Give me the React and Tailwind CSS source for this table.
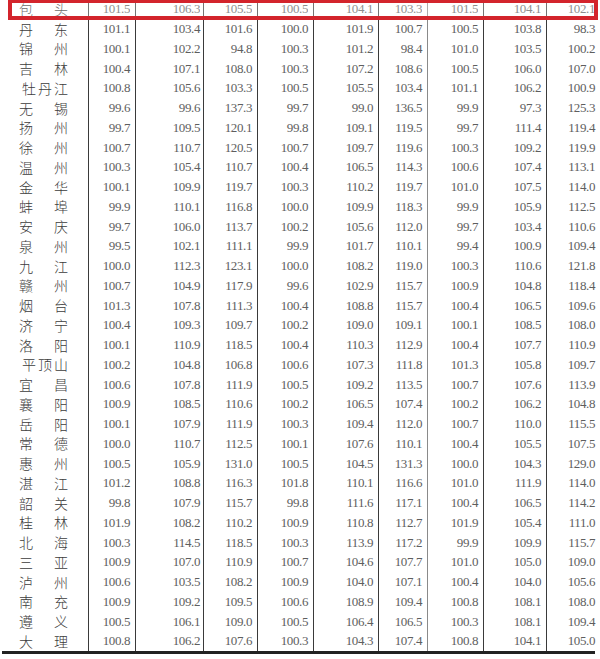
const rows = [
  ['包头', '101.5', '106.3', '105.5', '100.5', '104.1', '103.3', '101.5', '104.1', '102.1'],
  ['丹东', '101.1', '103.4', '101.6', '100.0', '101.9', '100.7', '100.5', '103.8', '98.3'],
  ['锦州', '100.1', '102.2', '94.8', '100.3', '101.2', '98.4', '101.0', '103.5', '100.2'],
  ['吉林', '100.4', '107.1', '108.0', '100.3', '107.2', '108.6', '100.5', '106.0', '107.0'],
  ['牡丹江', '100.8', '105.6', '103.3', '100.5', '105.5', '103.4', '101.1', '106.2', '100.9'],
  ['无锡', '99.6', '99.6', '137.3', '99.7', '99.0', '136.5', '99.9', '97.3', '125.3'],
  ['扬州', '99.7', '109.5', '120.1', '99.8', '109.1', '119.5', '99.7', '111.4', '119.4'],
  ['徐州', '100.7', '110.7', '120.5', '100.7', '109.7', '119.6', '100.3', '109.2', '119.9'],
  ['温州', '100.3', '105.4', '110.7', '100.4', '106.5', '114.3', '100.6', '107.4', '113.1'],
  ['金华', '100.1', '109.9', '119.7', '100.3', '110.2', '119.7', '101.0', '107.5', '114.0'],
  ['蚌埠', '99.9', '110.1', '116.8', '100.0', '109.9', '118.3', '99.9', '105.9', '112.5'],
  ['安庆', '99.7', '106.0', '113.7', '100.2', '105.6', '112.0', '99.7', '103.4', '110.6'],
  ['泉州', '99.5', '102.1', '111.1', '99.9', '101.7', '110.1', '99.4', '100.9', '109.4'],
  ['九江', '100.0', '112.3', '123.1', '100.0', '108.2', '119.0', '100.3', '110.6', '121.8'],
  ['赣州', '100.7', '104.9', '117.9', '99.6', '102.9', '115.7', '100.9', '104.8', '118.4'],
  ['烟台', '101.3', '107.8', '111.3', '100.4', '108.8', '115.7', '100.4', '106.5', '109.6'],
  ['济宁', '100.4', '109.3', '109.7', '100.2', '109.0', '109.1', '100.1', '108.5', '108.0'],
  ['洛阳', '100.1', '110.9', '118.5', '100.4', '110.3', '112.9', '100.4', '107.7', '110.9'],
  ['平顶山', '100.2', '104.8', '106.8', '100.6', '107.3', '111.8', '101.3', '105.8', '109.7'],
  ['宜昌', '100.6', '107.8', '111.9', '100.5', '109.2', '113.5', '100.7', '107.6', '113.9'],
  ['襄阳', '100.9', '108.5', '110.6', '100.2', '106.5', '107.4', '100.2', '106.2', '104.8'],
  ['岳阳', '100.1', '107.9', '111.9', '100.3', '109.4', '112.0', '100.7', '110.0', '115.5'],
  ['常德', '100.0', '110.7', '112.5', '100.1', '107.6', '110.1', '100.4', '105.5', '107.5'],
  ['惠州', '100.5', '105.9', '131.0', '100.5', '104.5', '131.3', '100.0', '104.3', '129.0'],
  ['湛江', '101.2', '108.8', '116.3', '101.8', '110.1', '116.6', '101.0', '111.9', '114.0'],
  ['韶关', '99.8', '107.9', '115.7', '99.8', '111.6', '117.1', '100.4', '106.5', '114.2'],
  ['桂林', '101.9', '108.2', '110.2', '100.9', '110.8', '112.7', '101.9', '105.4', '111.0'],
  ['北海', '100.3', '114.5', '118.5', '100.3', '113.9', '117.2', '99.9', '109.9', '115.7'],
  ['三亚', '100.9', '107.0', '110.9', '100.7', '104.6', '107.7', '101.0', '105.0', '109.0'],
  ['泸州', '100.6', '103.5', '108.2', '100.9', '104.0', '107.1', '100.4', '104.0', '105.6'],
  ['南充', '100.9', '109.2', '109.5', '100.6', '108.9', '109.4', '100.8', '108.1', '108.0'],
  ['遵义', '100.5', '106.1', '109.0', '100.5', '106.4', '106.5', '100.3', '108.1', '109.4'],
  ['大理', '100.8', '106.2', '107.6', '100.3', '104.3', '107.4', '100.8', '104.1', '105.0'],
];

// left border of each value column; the one at x=483 is fainter
const lineCls = [
  'border-[#3a3a3a]',
  'border-[#3a3a3a]',
  'border-[#3a3a3a]',
  'border-[#3a3a3a]',
  'border-[#3a3a3a]',
  'border-[#3a3a3a]',
  'border-[#8a8a8a]',
  'border-[#3a3a3a]',
  'border-[#3a3a3a]',
];

function CityName({ name }) {
  if (name.length === 3) {
    return (
      <div className="flex justify-center gap-[2px] pl-[2px]">
        {name.split('').map((ch, i) => (
          <span key={i}>{ch}</span>
        ))}
      </div>
    );
  }
  return (
    <div className="flex justify-between pl-[19px] pr-[20px]">
      <span>{name[0]}</span>
      <span>{name[1]}</span>
    </div>
  );
}

export default function App() {
  return (
    <div className="relative w-[600px] h-[659px] bg-white overflow-hidden">
      <div className="-mt-[1px] grid grid-cols-[88px_47px_68px_54px_56px_65px_49px_56px_63px_54px]">
        {rows.map((row, r) => (
          <div key={r} className="contents">
            <div
              className={`h-[19.75px] flex items-center text-[14px] font-light leading-none text-[#3c3c3c] ${
                r === 0 ? 'opacity-75' : ''
              }`}
              style={{ fontFamily: '"Noto Sans CJK SC", sans-serif' }}
            >
              <div className="w-full">
                <CityName name={row[0]} />
              </div>
            </div>
            {row.slice(1).map((v, c) => (
              <div
                key={c}
                className={`h-[19.75px] flex items-center justify-end border-l-[1.5px] ${lineCls[c]} ${
                  c === 1 ? 'pr-[3px]' : 'pr-[5px]'
                } text-[13px] leading-none tracking-[-0.4px] text-[#5e5e5e] ${r === 0 ? 'opacity-70' : ''}`}
                style={{ fontFamily: '"Liberation Serif", serif' }}
              >
                {v}
              </div>
            ))}
          </div>
        ))}
      </div>

      {/* bottom rule */}
      <div className="ml-[2px] mr-[5px] h-[3px] bg-[#222]" />

      {/* red highlight round the first row */}
      <div className="absolute left-[8px] -top-[1px] w-[590px] h-[21px] border-[4px] border-[#d3242c]" />
    </div>
  );
}
